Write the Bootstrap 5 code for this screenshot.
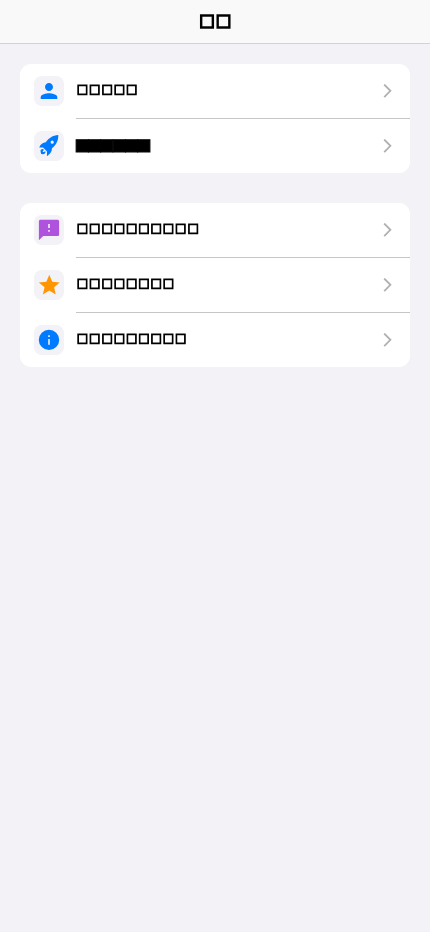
<!DOCTYPE html>
<html lang="zh">
<head>
<meta charset="utf-8">
<meta name="viewport" content="width=device-width, initial-scale=1">
<title>□□</title>
<link href="https://cdn.jsdelivr.net/npm/bootstrap@5.3.0/dist/css/bootstrap.min.css" rel="stylesheet">
<style>
body{background:#f2f2f7;font-family:"DejaVu Sans",sans-serif;color:#000;min-height:100vh}
.top-bar{height:44px;background:#f9f9f9;border-bottom:1px solid #d3d3d6}
.page-title{font-size:16.5px;line-height:20px;letter-spacing:.9px;-webkit-text-stroke:1.5px #000;margin:0;font-weight:400;transform:translate(0,-1.4px) scaleY(1.04);will-change:transform}
.settings{padding:20px}
.group{border-radius:11px;overflow:hidden;background:#fff;margin-bottom:30px}
.setting{height:54px;color:#000;padding:0 17px 0 14px}
.setting + .setting{height:55px;padding-top:1px;background:linear-gradient(#c6c6c8,#c6c6c8) 56px 0/100% 1px no-repeat}
.tile{width:30px;height:30px;border-radius:8px;background:#f2f2f7;margin-right:12px}
.caption{font-size:12px;line-height:16px;letter-spacing:.95px;-webkit-text-stroke:1px #000;white-space:nowrap;transform:translate(.8px,-2px) scaleY(1.06);will-change:transform}
.caption-solid{font-size:16px;line-height:16px;letter-spacing:-2.82px;-webkit-text-stroke:1.1px #000;transform:translate(-1.5px,-.7px)}
</style>
<script src="https://cdn.jsdelivr.net/npm/bootstrap@5.3.0/dist/js/bootstrap.bundle.min.js"></script>
</head>
<body>
<header class="top-bar d-flex align-items-center justify-content-center"><h1 class="page-title">□□</h1></header>
<main class="settings">
<nav class="group">
<a href="#" class="setting d-flex align-items-center text-decoration-none"><span class="tile d-flex align-items-center justify-content-center"><svg width="24" height="24" viewBox="0 0 24 24" fill="#007aff"><path d="M12 12c2.21 0 4-1.79 4-4s-1.79-4-4-4-4 1.79-4 4 1.79 4 4 4zm0 2.2c-2.67 0-8.3 1.2-8.3 3.8v2h16.600v-2c0-2.600-5.630-3.800-8.300-3.800z"/></svg></span><span class="caption flex-grow-1">□□□□□</span><svg width="10" height="14" viewBox="0 0 10 14" fill="none" stroke="#b0b0b2" stroke-width="1.8"><path d="M1.2 .5l6.2 6.300-6.200 6.300"/></svg></a>
<a href="#" class="setting d-flex align-items-center text-decoration-none"><span class="tile d-flex align-items-center justify-content-center"><svg width="22" height="22" viewBox="0 0 22 22" fill="#007aff"><path fill-rule="evenodd" d="M20.300 0C14.500 .5 11 2.900 7.800 7.300C5 7.500 2.400 9.200 1.200 12.500L5 12.500L9 16.500L8.900 21.200C12 19.200 14 16.900 14 13.300C18.400 9.700 20.400 5.500 20.300 0zM14.200 5.600a1.600 1.600 0 1 1 0 3.200a1.600 1.600 0 0 1 0-3.200z"/><path d="M5 13.900C2.800 14 2.400 15 2.600 16.600C2.700 17.600 3 18.300 3.200 19C5.600 19.500 7.800 18.900 7.500 16.400L6.700 15.900C6.700 16.900 5.900 17.300 5 17C4.500 16.200 5 15.500 6 15z"/></svg></span><span class="caption caption-solid flex-grow-1">■■■■■■</span><svg width="10" height="14" viewBox="0 0 10 14" fill="none" stroke="#b0b0b2" stroke-width="1.8"><path d="M1.2 .5l6.2 6.300-6.200 6.300"/></svg></a>
</nav>
<nav class="group">
<a href="#" class="setting d-flex align-items-center text-decoration-none"><span class="tile d-flex align-items-center justify-content-center"><svg width="24" height="24" viewBox="0 0 24 24" fill="#af52de"><path d="M20.500 1.700H3.500c-.9 0-1.600.7-1.600 1.600v19l4.300-4.300h14.300c.9 0 1.600-.7 1.600-1.600V3.300c0-.9-.7-1.600-1.600-1.600zm-7.700 12h-1.600v-1.700h1.600v1.700zm0-3.700h-1.600V6h1.600v4z"/></svg></span><span class="caption flex-grow-1">□□□□□□□□□□</span><svg width="10" height="14" viewBox="0 0 10 14" fill="none" stroke="#b0b0b2" stroke-width="1.8"><path d="M1.2 .5l6.2 6.300-6.200 6.300"/></svg></a>
<a href="#" class="setting d-flex align-items-center text-decoration-none"><span class="tile d-flex align-items-center justify-content-center"><svg width="25" height="25" viewBox="0 0 24 24" fill="#ff9500"><path d="M11.800 16.900L18 20.700l-1.640-7.030L21.800 9l-7.190-.61L11.800 1.700 9 8.400 1.800 9l5.460 4.700L5.620 20.700z"/></svg></span><span class="caption flex-grow-1">□□□□□□□□</span><svg width="10" height="14" viewBox="0 0 10 14" fill="none" stroke="#b0b0b2" stroke-width="1.8"><path d="M1.2 .5l6.2 6.300-6.200 6.300"/></svg></a>
<a href="#" class="setting d-flex align-items-center text-decoration-none"><span class="tile d-flex align-items-center justify-content-center"><svg width="24" height="24" viewBox="0 0 24 24" fill="#007aff"><path fill-rule="evenodd" d="M12 1.700a10.200 10.200 0 1 0 0 20.400a10.200 10.200 0 0 0 0-20.400zM11.200 11h1.600v5.700h-1.600zM11.200 7.300h1.600v1.700h-1.600z"/></svg></span><span class="caption flex-grow-1">□□□□□□□□□</span><svg width="10" height="14" viewBox="0 0 10 14" fill="none" stroke="#b0b0b2" stroke-width="1.8"><path d="M1.2 .5l6.2 6.300-6.200 6.300"/></svg></a>
</nav>
</main>
</body>
</html>
